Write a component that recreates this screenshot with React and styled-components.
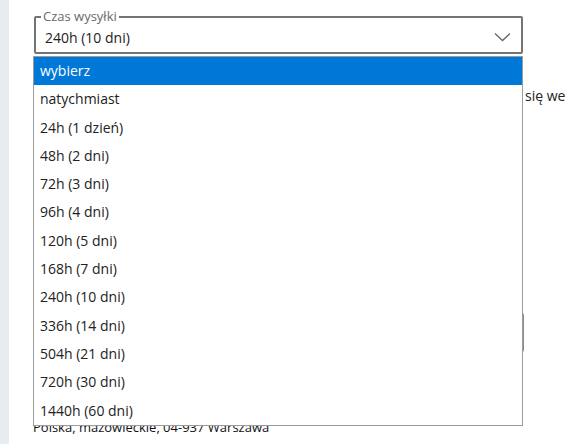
import React from "react";
import styled, { createGlobalStyle } from "styled-components";

const Global = createGlobalStyle`
  html, body { margin: 0; padding: 0; background: #fff; }
  body { font-family: "Open Sans", "Liberation Sans", sans-serif; color: #222; }
`;

const Page = styled.div`
  display: flex;
  height: 444px;
  overflow: hidden;
  position: relative;
`;

const Sidebar = styled.div`
  width: 9px;
  flex: none;
  background: #e9ecef;
`;

const Main = styled.div`
  flex: 1;
  min-width: 0;
  padding: 9px 46px 0 25px;
  display: flex;
  flex-direction: column;
`;

const Field = styled.fieldset`
  margin: 0;
  padding: 1px 10px 3px 9px;
  border: 2px solid #747474;
  border-radius: 2px;
  min-width: 0;
`;

const Legend = styled.legend`
  font-size: 13px;
  line-height: 15px;
  color: #6a6a6a;
  padding: 0 2px;
  margin-left: -4px;
`;

const ValueRow = styled.div`
  display: flex;
  align-items: center;
  justify-content: space-between;
  height: 24px;
  font-size: 14px;
  color: #222;
`;

const Chevron = styled.svg`
  width: 17px;
  height: 10px;
`;

const TextLine = styled.div`
  display: flex;
  font-size: 14px;
  line-height: 19px;
  margin-top: 32px;
  margin-right: -46px;
  white-space: nowrap;
  color: #222;
`;

const Hidden = styled.span`
  width: 491px;
  flex: none;
  overflow: hidden;
`;

const InputBox = styled.div`
  margin-top: 208px;
  margin-right: -1px;
  height: 35px;
  border: 2px solid #8a8a8a;
  border-radius: 2px;
`;

const Address = styled.div`
  margin-top: 66px;
  font-size: 13px;
  line-height: 18px;
  color: #111;
  margin-left: -1px;
`;

const List = styled.ul`
  position: absolute;
  top: 56px;
  left: 33px;
  width: 488px;
  margin: 0;
  padding: 0;
  list-style: none;
  background: #fff;
  border: 1px solid #9c9c9c;
`;

const Item = styled.li`
  height: 28.3px;
  line-height: 28.3px;
  padding-left: 6px;
  font-size: 14px;
  white-space: nowrap;
  color: ${(p) => (p.$active ? "#fff" : "#222")};
  background: ${(p) => (p.$active ? "#0078d7" : "transparent")};
`;

const options = [
  "wybierz",
  "natychmiast",
  "24h (1 dzień)",
  "48h (2 dni)",
  "72h (3 dni)",
  "96h (4 dni)",
  "120h (5 dni)",
  "168h (7 dni)",
  "240h (10 dni)",
  "336h (14 dni)",
  "504h (21 dni)",
  "720h (30 dni)",
  "1440h (60 dni)",
];

export default function App() {
  return (
    <>
      <Global />
      <Page>
        <Sidebar />
        <Main>
          <Field>
            <Legend>Czas wysyłki</Legend>
            <ValueRow>
              <span>240h (10 dni)</span>
              <Chevron viewBox="0 0 17 10">
                <path d="M1 1.5 L8.5 8.5 L16 1.5" fill="none" stroke="#666" strokeWidth="1.3" />
              </Chevron>
            </ValueRow>
          </Field>
          <TextLine>
            <Hidden>Oświadczam, że zapoznałem się z regulaminem i zobowiązuję się do</Hidden>
            <span>się we</span>
          </TextLine>
          <InputBox />
          <Address>Polska, mazowieckie, 04-937 Warszawa</Address>
        </Main>
        <List>
          {options.map((o, i) => (
            <Item key={o} $active={i === 0}>
              {o}
            </Item>
          ))}
        </List>
      </Page>
    </>
  );
}
